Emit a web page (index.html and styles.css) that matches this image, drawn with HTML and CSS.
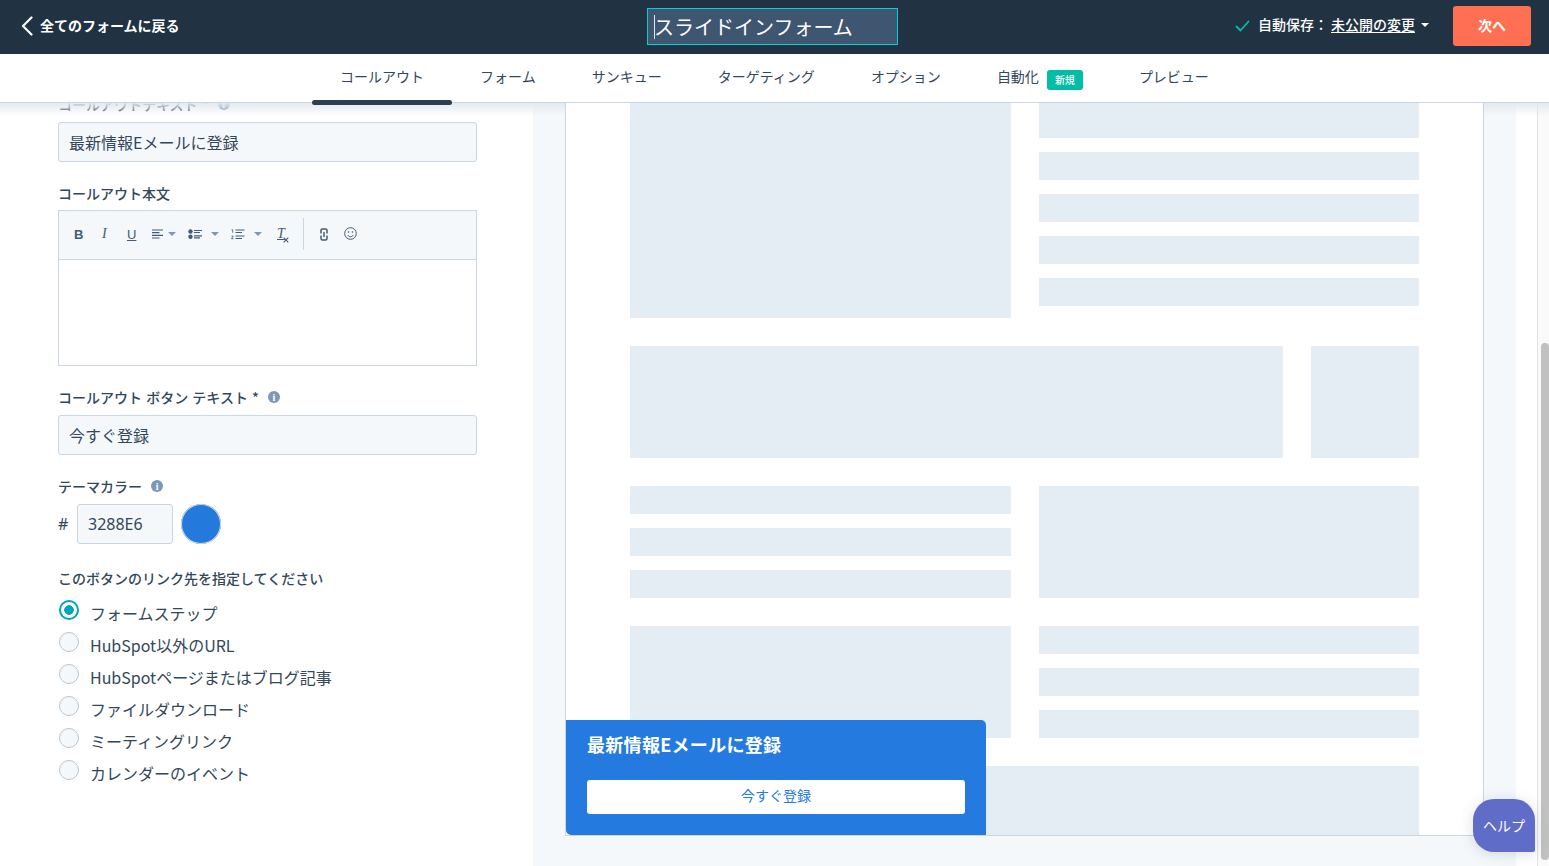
FILE: index.html
```html
<!DOCTYPE html>
<html lang="ja">
<head>
<meta charset="utf-8">
<title>スライドインフォーム</title>
<link rel="stylesheet" href="styles.css">
</head>
<body>
<header class="topbar">
  <a class="back">
    <svg class="back-icon" width="12" height="20" viewBox="0 0 12 20"><path d="M10.5 1.5 2 10l8.5 8.5" fill="none" stroke="#fff" stroke-width="2.2" stroke-linecap="round" stroke-linejoin="round"/></svg>
    <span class="back-text">全てのフォームに戻る</span>
  </a>
  <div class="title"><span class="caret"></span><span>スライドインフォーム</span></div>
  <div class="status">
    <svg class="status-check" width="15" height="12" viewBox="0 0 15 12"><path d="M1.5 6.5 5.5 10.500 13.500 1.500" fill="none" stroke="#00bda5" stroke-width="1.800" stroke-linecap="round" stroke-linejoin="round"/></svg>
    <span class="status-text">自動保存：</span>
    <span class="status-link">未公開の変更</span>
    <span class="tri tri-white"></span>
    <button class="next">次へ</button>
  </div>
</header>
<nav class="tabs">
  <a class="tab active">コールアウト</a>
  <a class="tab">フォーム</a>
  <a class="tab">サンキュー</a>
  <a class="tab">ターゲティング</a>
  <a class="tab">オプション</a>
  <a class="tab">自動化<span class="badge">新規</span></a>
  <a class="tab">プレビュー</a>
</nav>
<main class="main">
  <div class="fade"></div>
  <section class="form">
    <div class="field first">
      <label class="label">コールアウトテキスト * <span class="info">i</span></label>
      <div class="input">最新情報Eメールに登録</div>
    </div>
    <div class="field">
      <label class="label label-editor">コールアウト本文</label>
      <div class="editor">
        <div class="toolbar">
          <span class="tool tool-b">B</span>
          <span class="tool tool-i">I</span>
          <span class="tool tool-u">U</span>
          <span class="tool tool-menu">
            <svg width="12" height="10" viewBox="0 0 12 10"><path d="M0 1h11M0 3.700h7.500M0 6.300h11M0 9h7.500" stroke="#425b76" stroke-width="1.200"/></svg><span class="tri tri-gray"></span>
          </span>
          <span class="tool tool-menu wide">
            <svg width="14" height="10" viewBox="0 0 14 10"><circle cx="2.500" cy="2.500" r="2.200" fill="#425b76"/><circle cx="2.500" cy="7.800" r="2.200" fill="#425b76"/><path d="M6 1.500h8M6 3.500h6M6 6.800h8M6 8.800h6" stroke="#425b76" stroke-width="1.200"/></svg><span class="tri tri-gray tri-far"></span>
          </span>
          <span class="tool tool-menu wide">
            <svg width="14" height="11" viewBox="0 0 14 11"><path d="M.5.800h1.200v3M.5 7h1.700L.5 9.700h2" fill="none" stroke="#425b76" stroke-width=".8"/><path d="M4.500 1h9M4.500 3.500h6.500M4.500 7h9M4.500 9.500h6.500" stroke="#425b76" stroke-width="1.200"/></svg><span class="tri tri-gray tri-far"></span>
          </span>
          <span class="tool tool-clear">T<svg class="clear-x" width="6" height="6" viewBox="0 0 6 6"><path d="m.7.700 4.600 4.600M5.300.700.7 5.300" stroke="#425b76" stroke-width="1.100"/></svg></span>
          <span class="sep"></span>
          <span class="tool tool-link">
            <svg width="8" height="13" viewBox="0 0 8 13"><path d="M1 5V2.500C1 1.600 1.700 1 2.500 1h3C6.300 1 7 1.600 7 2.500V5M1 8v2.500c0 .9.700 1.500 1.500 1.500h3c.8 0 1.500-.6 1.500-1.500V8M4 4.500v4" fill="none" stroke="#425b76" stroke-width="1.500" stroke-linecap="round"/></svg>
          </span>
          <span class="tool tool-emoji">
            <svg width="13" height="13" viewBox="0 0 13 13"><circle cx="6.500" cy="6.500" r="5.800" fill="none" stroke="#425b76"/><circle cx="4.500" cy="5" r=".8" fill="#425b76"/><circle cx="8.500" cy="5" r=".8" fill="#425b76"/><path d="M3.700 8c.7 1.200 1.700 1.700 2.800 1.700S8.600 9.200 9.300 8" fill="none" stroke="#425b76"/></svg>
          </span>
        </div>
        <div class="editor-body"></div>
      </div>
    </div>
    <div class="field">
      <label class="label">コールアウト ボタン テキスト * <span class="info">i</span></label>
      <div class="input">今すぐ登録</div>
    </div>
    <div class="field">
      <label class="label">テーマカラー <span class="info">i</span></label>
      <div class="color-row">
        <span class="hash">#</span>
        <div class="input color-input">3288E6</div>
        <span class="swatch"></span>
      </div>
    </div>
    <div class="field field-radios">
      <label class="label label-radios">このボタンのリンク先を指定してください</label>
      <div class="radio checked"><span class="dot"></span><span class="radio-text">フォームステップ</span></div>
      <div class="radio"><span class="dot"></span><span class="radio-text">HubSpot以外のURL</span></div>
      <div class="radio"><span class="dot"></span><span class="radio-text">HubSpotページまたはブログ記事</span></div>
      <div class="radio"><span class="dot"></span><span class="radio-text">ファイルダウンロード</span></div>
      <div class="radio"><span class="dot"></span><span class="radio-text">ミーティングリンク</span></div>
      <div class="radio"><span class="dot"></span><span class="radio-text">カレンダーのイベント</span></div>
    </div>
  </section>
  <section class="preview">
    <div class="canvas">
      <div class="page">
        <div class="row row-tall">
          <div class="block col"></div>
          <div class="bars col"><i></i><i></i><i></i><i></i><i></i></div>
        </div>
        <div class="row">
          <div class="block wide-col"></div>
          <div class="block narrow-col"></div>
        </div>
        <div class="row">
          <div class="bars col"><i></i><i></i><i></i></div>
          <div class="block col"></div>
        </div>
        <div class="row">
          <div class="block col"></div>
          <div class="bars col"><i></i><i></i><i></i></div>
        </div>
        <div class="row">
          <div class="block full"></div>
        </div>
      </div>
      <div class="callout">
        <div class="callout-title">最新情報Eメールに登録</div>
        <div class="callout-btn">今すぐ登録</div>
      </div>
    </div>
  </section>
  <div class="strip"></div>
  <div class="scrollbar"><div class="thumb"></div></div>
  <button class="help">ヘルプ</button>
</main>
</body>
</html>
```

FILE: styles.css
```css
* { box-sizing: border-box; }
html, body { margin: 0; height: 866px; overflow: hidden; }
body {
  width: 1549px;
  display: flex;
  flex-direction: column;
  background: #fff;
  color: #33475b;
  font-family: "Noto Sans CJK JP", "Noto Sans", sans-serif;
  font-size: 14px;
}
.topbar {
  height: 54px;
  flex: none;
  background: #213343;
  color: #fff;
  display: flex;
  align-items: flex-start;
}
.back {
  display: flex;
  align-items: center;
  gap: 7px;
  height: 52px;
  margin-left: 21px;
  font-size: 14px;
  font-weight: 700;
  width: 605px;
}
.back-text { padding-bottom: 2px; }
.title {
  width: 251px;
  height: 37px;
  margin: 8px 0 0 21px;
  background: #3e5670;
  border: 1px solid #00d0d8;
  display: flex;
  align-items: center;
  padding-left: 6px;
  font-size: 20px;
  color: #fff;
}
.caret { width: 1px; height: 24px; background: #dfe6ee; margin-right: -1px; }
.status {
  margin: 6px 18px 0 auto;
  display: flex;
  align-items: center;
  font-size: 14px;
  font-weight: 500;
}
.status-check { margin-bottom: 1px; }
.status-text { margin-left: 8px; width: 73px; padding-bottom: 4px; }
.status-link { text-decoration: underline; text-underline-offset: 2px; padding-bottom: 4px; }
.tri {
  display: inline-block;
  width: 0; height: 0;
  border-left: 4px solid transparent;
  border-right: 4px solid transparent;
}
.tri-white { border-top: 4px solid #fff; margin: 0 24px 3px 6px; }
.tri-gray { border-top: 4px solid #7c98b6; margin-left: 4px; }
.tri-far { margin-left: 9px; }
.next {
  width: 78px;
  height: 40px;
  border: 0;
  border-radius: 3px;
  background: #ff7052;
  color: #fff;
  padding: 0 0 2px;
  font: 700 14px "Noto Sans CJK JP", sans-serif;
}
.tabs {
  height: 49px;
  flex: none;
  border-bottom: 1px solid #cbd6e2;
  display: flex;
  justify-content: center;
  background: #fff;
  position: relative;
  z-index: 3;
}
.tab {
  padding: 0 28px 4px;
  height: 48px;
  display: flex;
  align-items: center;
  position: relative;
  color: #33475b;
  font-size: 14px;
}
.tab.active::after {
  content: "";
  position: absolute;
  left: 0; right: 0;
  bottom: -3px;
  height: 5px;
  border-radius: 3px;
  background: #2d3e50;
}
.badge {
  margin: 8px 0 0 8px;
  width: 36px;
  height: 20px;
  padding-bottom: 2px;
  border-radius: 3px;
  background: #00bda5;
  color: #fff;
  font-size: 10px;
  font-weight: 500;
  display: flex;
  align-items: center;
  justify-content: center;
}
.main {
  flex: 1;
  display: flex;
  position: relative;
  overflow: hidden;
}
.fade {
  position: absolute;
  left: 0; right: 0; top: 0;
  height: 13px;
  z-index: 1;
  background: linear-gradient(rgba(226,233,241,.95), rgba(255,255,255,0));
  pointer-events: none;
}
.form {
  width: 533px;
  flex: none;
  padding-left: 58px;
  margin-top: -8px;
}
.field { width: 419px; margin-bottom: 22px; }
.label {
  display: flex;
  align-items: center;
  height: 20px;
  padding-bottom: 2px;
  margin-bottom: 7px;
  font-size: 14px;
  font-weight: 500;
  white-space: pre;
  word-spacing: 1px;
}
.label-editor { margin-bottom: 6px; }
.info {
  display: inline-flex;
  align-items: center;
  justify-content: center;
  width: 12px;
  height: 12px;
  margin-left: 5px;
  border-radius: 50%;
  background: #7c98b6;
  color: #fff;
  font: 700 10px "Liberation Serif", serif;
}
.input {
  height: 40px;
  border: 1px solid #cbd6e2;
  border-radius: 3px;
  background: #f5f8fa;
  padding: 0 10px;
  display: flex;
  align-items: center;
  font-size: 16px;
}
.editor { border: 1px solid #cbd6e2; height: 156px; }
.toolbar {
  height: 49px;
  padding-bottom: 2px;
  background: #f5f8fa;
  border-bottom: 1px solid #cbd6e2;
  display: flex;
  align-items: center;
  color: #425b76;
}
.tool { display: flex; align-items: center; flex: none; }
.tool-b { font: 700 13px "Liberation Sans", sans-serif; margin-left: 15px; width: 27px; }
.tool-i { font: italic 400 14px "Liberation Serif", serif; width: 25px; margin-left: 1px; }
.tool-u { font: 400 13px "Liberation Sans", sans-serif; text-decoration: underline; width: 25px; }
.tool-menu { width: 36px; }
.tool-menu.wide { width: 43px; }
.tool-clear { font: italic 400 14px "Liberation Serif", serif; text-decoration: underline; position: relative; width: 26px; margin-left: 3px; }
.clear-x { position: absolute; left: 6px; top: 11px; }
.sep { width: 1px; height: 32px; background: #cbd6e2; margin: 0 16px 0 0; flex: none; }
.tool-link { width: 24px; margin-top: 1px; }
.tool-emoji { margin-top: -1px; }
.editor-body { height: 105px; background: #fff; }
.color-row { display: flex; align-items: center; }
.hash { width: 19px; font: 16px "Noto Sans", sans-serif; }
.color-input { width: 96px; font-family: "Noto Sans", sans-serif; font-size: 16px; }
.swatch {
  width: 40px; height: 40px;
  margin-left: 8px;
  border-radius: 50%;
  background: #2479dc;
  box-shadow: inset 0 0 0 1px #cbd6e2;
}
.field-radios { margin-top: 25px; }
.label-radios { margin-bottom: 5px; }
.radio {
  height: 32px;
  display: flex;
  align-items: center;
  padding-left: 1px;
}
.dot {
  width: 20px; height: 20px;
  flex: none;
  border-radius: 50%;
  border: 1px solid #b7c4d3;
  background: #f5f8fa;
}
.radio.checked .dot {
  border: 2px solid #00a4bd;
  background: radial-gradient(circle, #00a4bd 0 4.500px, #fff 5px);
}
.radio-text { margin-left: 11px; padding-top: 6px; font-size: 16px; }
.preview {
  width: 983px;
  flex: none;
  background: #f5f8fa;
  padding: 0 32px 30px;
}
.canvas {
  height: 100%;
  position: relative;
  z-index: 2;
  background: #fff;
  border-left: 1px solid #cbd6e2;
  border-right: 1px solid #cbd6e2;
  border-bottom: 1px solid #cbd6e2;
  overflow: hidden;
}
.page {
  margin: -5px 0 0 64px;
  width: 789px;
  display: flex;
  flex-direction: column;
  gap: 28px;
}
.row {
  height: 112px;
  flex: none;
  display: flex;
  justify-content: space-between;
}
.row-tall { height: 220px; }
.block { background: #e5edf4; }
.col { width: 381px; }
.col + .col { width: 380px; }
.wide-col { width: 653px; }
.narrow-col { width: 108px; }
.full { width: 100%; }
.bars {
  display: flex;
  flex-direction: column;
  justify-content: center;
  gap: 14px;
}
.bars i { display: block; height: 28px; background: #e5edf4; }
.row-tall .bars { justify-content: flex-end; padding-bottom: 12px; }
.row-tall .bars i:first-child { height: 36px; }
.callout {
  position: absolute;
  left: 0;
  bottom: 0;
  width: 420px;
  height: 115px;
  background: #247ade;
  border-radius: 0 5px 0 5px;
  color: #fff;
  padding: 11px 21px 0;
}
.callout-title { font-size: 18px; font-weight: 700; height: 49px; line-height: 26px; letter-spacing: .3px; }
.callout-btn {
  height: 34px;
  padding-bottom: 5px;
  background: #fff;
  border-radius: 3px;
  color: #247ade;
  font-size: 14px;
  display: flex;
  align-items: center;
  justify-content: center;
}
.strip { width: 21px; flex: none; background: #fff; }
.scrollbar {
  width: 12px;
  flex: none;
  background: #fafafa;
  border-left: 1px solid #e2e2e2;
  padding: 240px 1px 6px 3px;
}
.thumb { width: 8px; height: 100%; border-radius: 4px; background: #c1c1c1; }
.help {
  position: absolute;
  left: 1473px;
  top: 696px;
  z-index: 4;
  width: 62px;
  height: 53px;
  padding: 0 0 2px;
  border: 0;
  border-radius: 21px 21px 2px 21px;
  background: #5f6cc8;
  color: #fff;
  font: 400 14px "Noto Sans CJK JP", sans-serif;
  box-shadow: 0 2px 14px rgba(70, 90, 110, .2);
}
```
